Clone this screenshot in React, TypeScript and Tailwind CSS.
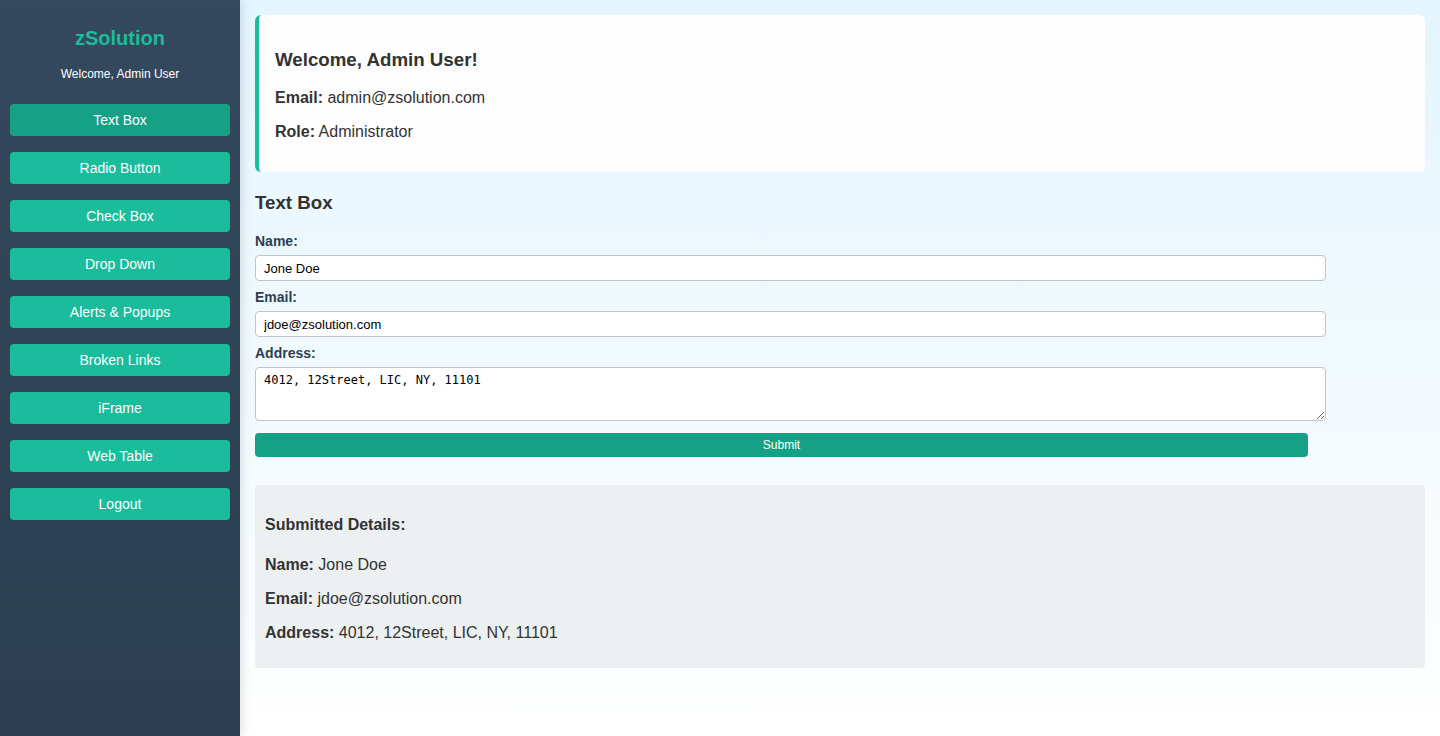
const navItems = [
  'Text Box',
  'Radio Button',
  'Check Box',
  'Drop Down',
  'Alerts & Popups',
  'Broken Links',
  'iFrame',
  'Web Table',
  'Logout',
];

export default function App() {
  const active = 'Text Box';

  return (
    <div className="flex min-h-[736px] font-['Liberation_Sans',Arial,sans-serif] text-[#333]">
      {/* Sidebar */}
      <aside className="w-[240px] shrink-0 bg-gradient-to-b from-[#34495e] to-[#2c3e50] px-[10px] pt-[26px] shadow-[2px_0_10px_rgba(0,0,0,0.12)] z-10">
        <h2 className="text-center text-[20px] font-bold text-[#1abc9c] leading-[24px]">
          zSolution
        </h2>
        <p className="mt-[17px] text-center text-[12px] leading-[14px] text-white">
          Welcome, Admin User
        </p>
        <nav className="mt-[23px] flex flex-col gap-[16px]">
          {navItems.map((item) => (
            <button
              key={item}
              className={`h-[32px] w-full rounded-[4px] text-[14px] text-white ${
                item === active ? 'bg-[#16a085]' : 'bg-[#1abc9c]'
              }`}
            >
              {item}
            </button>
          ))}
        </nav>
      </aside>

      {/* Main */}
      <main className="flex-1 bg-gradient-to-b from-[#e3f5fe] to-[#ffffff] p-[15px]">
        {/* Welcome card */}
        <div className="rounded-[6px] border-l-4 border-[#1abc9c] bg-[#fdfdfd] p-[15px] pl-[16px]">
          <h3 className="mt-[19px] mb-[18px] text-[18.72px] font-bold leading-[22px]">
            Welcome, Admin User!
          </h3>
          <p className="text-[16px] leading-[18px]">
            <strong>Email:</strong> admin@zsolution.com
          </p>
          <p className="mt-[16px] mb-[16px] text-[16px] leading-[18px]">
            <strong>Role:</strong> Administrator
          </p>
        </div>

        {/* Text Box form */}
        <h2 className="mt-[20px] text-[18.72px] font-bold leading-[22px]">
          Text Box
        </h2>
        <form className="mt-[19px]" onSubmit={(e) => e.preventDefault()}>
          <label className="block text-[14px] font-bold leading-[16px] text-[#2c3e50]">
            Name:
          </label>
          <input
            defaultValue="Jone Doe"
            className="mt-[6px] block h-[26px] w-[1071px] rounded-[4px] border border-[#bfc4c9] bg-white px-[8px] text-[13px] text-black outline-none"
          />
          <label className="mt-[8px] block text-[14px] font-bold leading-[16px] text-[#2c3e50]">
            Email:
          </label>
          <input
            defaultValue="jdoe@zsolution.com"
            className="mt-[6px] block h-[26px] w-[1071px] rounded-[4px] border border-[#bfc4c9] bg-white px-[8px] text-[13px] text-black outline-none"
          />
          <label className="mt-[8px] block text-[14px] font-bold leading-[16px] text-[#2c3e50]">
            Address:
          </label>
          <textarea
            defaultValue="4012, 12Street, LIC, NY, 11101"
            className="mt-[6px] block h-[54px] w-[1071px] rounded-[4px] border border-[#bfc4c9] bg-white px-[8px] pt-[5px] font-['DejaVu_Sans_Mono',monospace] text-[12px] leading-[15px] text-black outline-none"
          />
          <button
            type="submit"
            className="mt-[12px] block h-[24px] w-[1053px] rounded-[4px] bg-[#16a085] text-[12px] text-white"
          >
            Submit
          </button>
        </form>

        {/* Submitted details */}
        <div className="mt-[28px] rounded-[4px] bg-[#ecf0f1] p-[10px]">
          <h3 className="mt-[21px] text-[16px] font-bold leading-[18px]">
            Submitted Details:
          </h3>
          <p className="mt-[22px] text-[16px] leading-[18px]">
            <strong>Name:</strong> Jone Doe
          </p>
          <p className="mt-[16px] text-[16px] leading-[18px]">
            <strong>Email:</strong> jdoe@zsolution.com
          </p>
          <p className="mt-[16px] mb-[16px] text-[16px] leading-[18px]">
            <strong>Address:</strong> 4012, 12Street, LIC, NY, 11101
          </p>
        </div>
      </main>
    </div>
  );
}
